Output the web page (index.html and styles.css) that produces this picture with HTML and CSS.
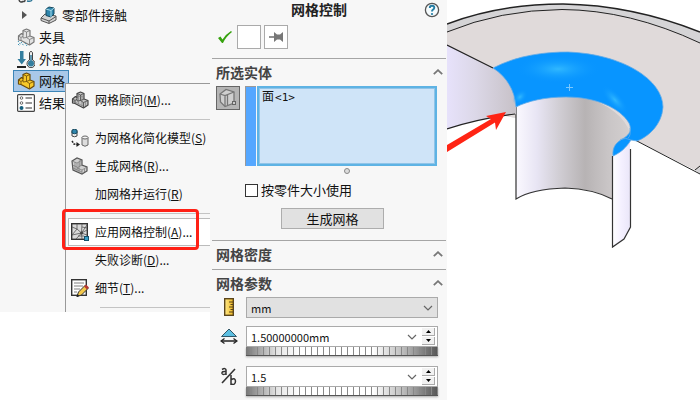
FILE: index.html
```html
<!DOCTYPE html>
<html lang="zh-CN">
<head>
<meta charset="utf-8">
<title>网格控制</title>
<link rel="stylesheet" href="styles.css">
</head>
<body>
<svg class="defs" aria-hidden="true">
  <defs>
    <symbol id="bracket" viewBox="0 0 18 18">
      <path d="M1.500 8 L4.500 5.500 L6 6.500 V2.500 L9.500 1 L13 2.500 V8 L17 9.500 V14 L12.500 17 L4 12.500 L1.500 12Z" fill="var(--body)" stroke="var(--edge)" stroke-width="1.200" stroke-linejoin="round"/>
      <path d="M6 2.500 L9.500 4 L13 2.500 M9.500 4 V9.500 L13 8 M9.500 9.500 L12.500 11.500 L17 9.500 M12.500 11.500 V16.500 M6 6.500 V10 L9.500 9.500 M1.500 8 L4 9.500 L6 8 M4 9.500 V12" fill="none" stroke="var(--edge)" stroke-width=".8"/>
    </symbol>
    <symbol id="up" viewBox="0 0 10 6"><path d="M.8 5.200 L5 1.200 L9.200 5.200" fill="none" stroke="#777" stroke-width="1.800"/></symbol>
    <symbol id="down" viewBox="0 0 10 6"><path d="M1 1 L5 5 L9 1" fill="none" stroke="#666" stroke-width="1.200"/></symbol>
  </defs>
</svg>
<main class="app">
  <nav class="side" aria-label="算例树">
    <ul class="tree">
      <li class="cut"><svg width="18" height="4" viewBox="0 0 18 4"><path d="M1 0 Q2 3 5 1.500 Q7 2 7 0" fill="none" stroke="#444" stroke-width="1.500"/><path d="M9 1 Q13 2 14 0" fill="none" stroke="#2b7596" stroke-width="1.500"/></svg></li>
      <li class="child"><svg class="twist" width="5" height="8" viewBox="0 0 5 8"><path d="M0 0 L5 4 L0 8Z" fill="#555"/></svg>
        <svg class="icon" viewBox="0 0 18 18"><path d="M1 12 L5 8 L16 10 V14 L9 17.500 L1 14.500Z" fill="#d4d4d4" stroke="#555"/><path d="M1 12 L9 15 L16 10.500 M9 15 V17" fill="none" stroke="#555"/><path d="M6 3 L9 1 L14 2 V8 L11 11 L6 9.500Z" fill="#2f86ad" stroke="#17495f"/><path d="M6 3 L11 4.500 L14 2 M11 4.500 V11" fill="none" stroke="#a8dcec"/></svg>零部件接触</li>
      <li><svg class="icon fixture" viewBox="0 0 18 18"><use href="#bracket"/><path d="M1 13 L4 17 M4 14 L7 18 M8 15 L10 18 M1 16 L3 18" stroke="#3b91b3" stroke-dasharray="1.500 1"/></svg>夹具</li>
      <li><svg class="icon" viewBox="0 0 18 18"><path d="M3 1 H6.500 V9 H9 L4.750 14.500 L.5 9 H3Z" fill="#347e9f"/><path d="M0 17 H9" stroke="#222" stroke-width="2"/><path d="M12.500 2.500 Q14 0 15.500 2.500 V10 A4 4 0 1 1 12.500 10Z" fill="#eee" stroke="#444"/><circle cx="14" cy="13.500" r="3" fill="#347e9f"/><path d="M14 5 V12" stroke="#347e9f" stroke-width="1.500"/></svg>外部载荷</li>
      <li class="current"><svg class="icon yellow" viewBox="0 0 18 18"><use href="#bracket"/></svg>网格</li>
      <li><svg class="icon" viewBox="0 0 18 18"><rect x=".6" y=".6" width="16.800" height="16.800" rx="1" fill="#fff" stroke="#444" stroke-width="1.200"/><g fill="#fff" stroke="#666"><circle cx="4.500" cy="4" r="1.300"/><circle cx="4.500" cy="9" r="1.300"/></g><circle cx="4.500" cy="14" r="2" fill="#17607e"/><path d="M8.500 4 H15 M8.500 9 H15 M8.500 14 H15" stroke="#777" stroke-width="1.300"/></svg>结果</li>
    </ul>
    <div class="menu">
      <button class="item"><svg class="icon gray" viewBox="0 0 18 18"><use href="#bracket"/><path d="M3 8 V12 M7.500 4 V13 M11 4 V15 M14.500 10 V15 M2 10 L12 15 M6 5 L13 6" stroke="#777" stroke-width=".6" fill="none"/></svg><span>网格顾问(<u>M</u>)...</span></button>
      <hr>
      <button class="item"><svg class="icon" viewBox="0 0 18 18"><path d="M1 2 V7 Q3.500 8.500 6 7 V2" fill="#eee" stroke="#444"/><path d="M1 1 V4 Q3.500 5.500 6 4 V1 Q3.500 -.5 1 1Z" fill="#2f86ad" stroke="#17495f"/><path d="M1 12 L3 15 L6 15.500" fill="none" stroke="#222" stroke-width="1.500" stroke-dasharray="2 1"/><path d="M5.500 13 L9 15.500 L5.500 18Z" fill="#222"/><path d="M11 8.500 V16 Q14 18.500 17 16 V8.500" fill="#ddd" stroke="#666"/><ellipse cx="14" cy="8.500" rx="3" ry="1.500" fill="#f5f5f5" stroke="#666"/></svg><span>为网格化简化模型(<u>S</u>)</span></button>
      <button class="item"><svg class="icon" viewBox="0 0 18 18"><path d="M1 4 L6 1 L11 3 V8 L16 10 V14 L11 17 L2 13Z" fill="#d0d0d0" stroke="#555" stroke-width="1.200"/><path d="M1 4 L6 6 L11 3 M6 6 V14 M6 11 L11 8 M6 11 L11 13 L16 10 M11 13 V17 M1.500 8 L6 10 M4 5 V13 M8 5 V15 M2 11 L11 15 M9 3 V9 M13.500 12 V15" fill="none" stroke="#777" stroke-width=".7"/></svg><span>生成网格(<u>R</u>)...</span></button>
      <button class="item"><span class="icon"></span><span>加网格并运行(<u>R</u>)</span></button>
      <hr>
      <button class="item hot"><svg class="icon" viewBox="0 0 18 18"><rect x=".7" y=".7" width="15.600" height="15.600" fill="#dadada" stroke="#333" stroke-width="1.400"/><path d="M1 4 L6 6 L10.500 10 L16 2 M6 1 V6 L1 12 L10.500 10 L5 16 M10.500 10 L11 1 M10.500 10 L16 7 M10.500 10 L16 12 M10.500 10 L11 16 M11 4 L16 5 M7 13 L13 13" fill="none" stroke="#555" stroke-width=".8"/><circle cx="10.500" cy="10" r="1.500" fill="#444"/><rect x="13.500" y="13.500" width="4" height="4" fill="#39a0c8" stroke="#16516b"/></svg><span>应用网格控制(<u>A</u>)...</span><i class="mark"></i></button>
      <button class="item"><span class="icon"></span><span>失败诊断(<u>D</u>)...</span></button>
      <button class="item"><svg class="icon" viewBox="0 0 18 18"><rect x=".7" y=".7" width="14.600" height="15.600" fill="#fff" stroke="#333" stroke-width="1.400"/><path d="M3 4 H13 M3 7 H12 M3 10 H9 M3 13 H6" stroke="#aaa" stroke-width="1.300"/><path d="M6 17.500 L7.500 13 L14 6.500 L17 9.500 L10.500 16Z" fill="#f4c84a" stroke="#333"/><path d="M13 7.500 L15 5.500 L18 8.500 L16 10.500Z" fill="#b53832"/><path d="M5.500 18 L6.500 15 L8.500 17Z" fill="#222"/></svg><span>细节(<u>T</u>)...</span></button>
      <hr>
    </div>
  </nav>

  <section class="panel">
    <header class="title"><h1>网格控制</h1>
      <button class="help" aria-label="帮助"><svg width="16" height="16" viewBox="0 0 16 16"><circle cx="8" cy="8" r="6.600" fill="#f5fbfd" stroke="#555" stroke-width="1.300"/><path d="M5.800 6 Q5.800 3.800 8 3.800 Q10.300 3.800 10.300 5.800 Q10.300 7 8.800 7.800 Q8 8.300 8 9.600" fill="none" stroke="#247da4" stroke-width="1.900"/><circle cx="8" cy="12" r="1.100" fill="#247da4"/></svg></button>
    </header>
    <div class="tools">
      <button class="ok" aria-label="确定"><svg width="14" height="12" viewBox="0 0 14 12"><path d="M0 7 L2.500 5.500 L4.500 8.500 Q8 3 13 0 L14 1 Q8 5.500 5 12 H4Z" fill="#36a20e"/></svg></button>
      <button class="box" aria-label="预览"></button>
      <button class="box" aria-label="保持可见"><svg width="14" height="10" viewBox="0 0 14 10"><path d="M0 5 H6" stroke="#777" stroke-width="1.600"/><path d="M5 0 L8 2.500 L11 2.500 L14 0 V10 L11 7.500 H8 L5 10Z" fill="#777"/></svg></button>
    </div>
    <section class="group picks">
      <h2><button class="head">所选实体<svg width="10" height="6"><use href="#up"/></svg></button></h2>
      <div class="pickrow">
        <button class="facebtn" aria-label="面"><svg width="18" height="20" viewBox="0 0 18 20"><path d="M1 6 L7 1.500 L15 4 V15 L6 18.500 L1.500 14Z" fill="#cfcfcf" stroke="#777" stroke-width="1.300"/><path d="M1 6 L6 7.500 L15 4 M6 7.500 V18 M8.500 7 V17" fill="none" stroke="#777" stroke-width="1.300"/><rect x="13.500" y="13.500" width="3" height="3" fill="#ccc" stroke="#666"/></svg></button>
        <div class="list"><span class="swatch"></span><div class="entries">面<span>&lt;1&gt;</span></div></div>
      </div>
      <span class="grip"></span>
      <label class="check"><input type="checkbox">按零件大小使用</label>
      <button class="create">生成网格</button>
    </section>
    <section class="group"><h2><button class="head">网格密度<svg width="10" height="6"><use href="#up"/></svg></button></h2></section>
    <section class="group params">
      <h2><button class="head">网格参数<svg width="10" height="6"><use href="#up"/></svg></button></h2>
      <div class="param">
        <svg class="pic" viewBox="0 0 18 20"><defs><linearGradient id="gold"><stop stop-color="#ffe98a"/><stop offset="1" stop-color="#efb820"/></linearGradient></defs><rect x="4.700" y="1.700" width="8.600" height="16.600" fill="url(#gold)" stroke="#5b451b" stroke-width="1.400"/><path d="M9 5 H13 M10.500 7.500 H13 M9 10 H13 M10.500 12.500 H13 M9 15 H13" stroke="#5b451b"/></svg>
        <div class="field unit"><select aria-label="单位"><option>mm</option></select><svg class="arrow" width="10" height="6"><use href="#down"/></svg></div>
      </div>
      <div class="param">
        <svg class="pic" viewBox="0 0 18 20"><path d="M1.500 10.500 L9 3 L16.500 10.500Z" fill="#5cbfe2" stroke="#315666"/><path d="M2 15 H16" stroke="#222" stroke-width="1.500"/><path d="M4.500 12.500 L1 15 L4.500 17.500 M13.500 12.500 L17 15 L13.500 17.500" fill="none" stroke="#222" stroke-width="1.300"/></svg>
        <div class="stack"><div class="field"><input aria-label="单元大小" value="1.50000000mm"><svg class="arrow" width="10" height="6"><use href="#down"/></svg><span class="spin"><button aria-label="增大"><svg width="5" height="3"><path d="M0 3 L2.500 0 L5 3Z"/></svg></button><button aria-label="减小"><svg width="5" height="3"><path d="M0 0 L2.500 3 L5 0Z"/></svg></button></span></div><div class="wheel"></div></div>
      </div>
      <div class="param">
        <svg class="pic" viewBox="0 0 18 20"><path d="M2 3.500 Q5.500 1.500 6 4 V9 M6 5.500 Q1.500 5 2 7.500 Q3 9.500 6 7.500" fill="none" stroke="#333" stroke-width="1.500"/><path d="M2 17 L15 3" stroke="#333" stroke-width="1.600"/><path d="M11 9 V19 M11 14 Q15 11 15.500 15 Q15.500 19.500 11 18" fill="none" stroke="#333" stroke-width="1.500"/></svg>
        <div class="stack"><div class="field"><input aria-label="比率" value="1.5"><svg class="arrow" width="10" height="6"><use href="#down"/></svg><span class="spin"><button aria-label="增大"><svg width="5" height="3"><path d="M0 3 L2.500 0 L5 3Z"/></svg></button><button aria-label="减小"><svg width="5" height="3"><path d="M0 0 L2.500 3 L5 0Z"/></svg></button></span></div><div class="wheel"></div></div>
      </div>
    </section>
  </section>

  <svg class="view" viewBox="447 0 253 400" preserveAspectRatio="xMinYMin slice" role="img" aria-label="零件模型">
    <defs>
      <linearGradient id="tube"><stop stop-color="#fbf9ff"/><stop offset=".18" stop-color="#e8e5f4"/><stop offset=".38" stop-color="#d0cdd3"/><stop offset=".6" stop-color="#b7b3b4"/><stop offset=".8" stop-color="#c9c5c6"/><stop offset="1" stop-color="#d4d0d0"/></linearGradient>
      <linearGradient id="wall"><stop stop-color="#e7e2fb"/><stop offset=".4" stop-color="#dcd8e8"/><stop offset="1" stop-color="#c7c1c7"/></linearGradient>
      <linearGradient id="strip"><stop stop-color="#fff"/><stop offset=".5" stop-color="#f4f0ff"/><stop offset="1" stop-color="#e9e5f8"/></linearGradient>
      <radialGradient id="shine"><stop stop-color="#35bcff" stop-opacity=".9"/><stop offset="1" stop-color="#0a96ff" stop-opacity="0"/></radialGradient>
    </defs>
    <path d="M447 24 Q500 4 563 4 Q632 5 700 32 V174 L695 170 L636 140 L500 115 L447 90Z" fill="#d5d4d6"/>
    <path d="M447 32 Q500 10 562 9.500 Q630 10 700 43 V168 L695 170 L636 140 L500 115 L447 90Z" fill="#e0dada"/>
    <path d="M447 24 Q500 4 563 4 Q632 5 700 32" fill="none" stroke="#222" stroke-width="1.500"/>
    <path d="M447 32 Q500 10 562 9.500 Q630 10 700 43 M636 140.500 L700 174 M695 170 L700 166" fill="none" stroke="#222"/>
    <path d="M516 107 Q540 90 590 98 Q630 115 631 140 L612 157 V199 Q593 188 565 188 Q532 190 516 199Z" fill="url(#tube)"/>
    <path d="M516 107 V199 Q532 189 565 188 Q593 189 612 199" fill="none" stroke="#333" stroke-width="1.200"/>
    <path d="M447 45 L493 68 C509 77 516 92 516 107 V114 Q477 119 447 129Z" fill="url(#wall)"/>
    <path d="M447 45 L493 68 M447 129 Q477 119 515 114" fill="none" stroke="#222" stroke-width="1.200"/>
    <path d="M612 156 L630 140 L631 227 L625 238 L612 247Z" fill="url(#strip)"/>
    <path d="M612.500 156 V247 L624 239 L630.500 227 V149" fill="none" stroke="#333" stroke-width="1.200"/>
    <path d="M493 68 C518 55 545 52 568 52 C623 54 663 80 663 107 C662 125 648 137 637 141 L631 140 C626 148 620 153 613 156 C612 146 617 142 624 138 C630 134 632 130 629 123 C620 108 596 97 566 97 C545 97 528 101 516 107 C515 91 507 77 493 68Z" fill="#0895ff" stroke="#65abe6" stroke-width=".8"/>
    <path d="M620 139.500 Q626 137 631 140 M630 128 Q631 136 628 138" fill="none" stroke="#65abe6" stroke-width=".8"/>
    <ellipse cx="558" cy="69" rx="42" ry="14" fill="url(#shine)"/>
    <ellipse cx="615" cy="100" rx="18" ry="7" transform="rotate(48 615 100)" fill="url(#shine)"/>
    <ellipse cx="520" cy="97" rx="9" ry="6" transform="rotate(-45 520 97)" fill="url(#shine)"/>
    <path d="M566 87.500 H573 M569.500 84 V91" stroke="#7ac8ff"/>
    <path d="M447 145 L491 119 L486 116 L506 112 L496 130 L495 122.500 L447 152Z" fill="#ff2414"/>
  </svg>
</main>
</body>
</html>
```

FILE: styles.css
```css
* { box-sizing: border-box; }
body { margin: 0; background: #fff; color: #111; font: 13px/20px "Noto Sans CJK SC", "Noto Sans", sans-serif; }
button, input, select { margin: 0; padding: 0; border: 0; background: none; color: inherit; font: inherit; }
h1, h2 { margin: 0; font-size: 14px; line-height: 20px; }
.defs { position: absolute; width: 0; height: 0; }
.app { display: grid; grid-template-columns: 210px 237px minmax(0, 1fr); min-height: 100vh; overflow: hidden; }

.side { position: relative; align-self: start; background: #f7f7f7; min-height: 312px; }
.tree { list-style: none; margin: 0; padding: 0 0 0 13px; }
.tree li { display: flex; align-items: center; gap: 4px; width: max-content; height: 22px; padding: 0 3px; border: 1px solid transparent; }
.tree .cut { height: 4px; border: 0; padding: 0 5px; }
.tree .child { padding-left: 8px; }
.twist { margin-right: 9px; }
.tree .current { background: #a9c8e8; border-color: #3c85b8; }
.icon { flex: none; width: 18px; height: 18px; --body: #d0d0d0; --edge: #555; }
.yellow { --body: #f8c928; --edge: #6b4a08; }
.fixture { --body: #e2e2e2; --edge: #777; }
.gray { --body: #c4c4c4; --edge: #444; }

.menu { position: absolute; top: 83px; left: 65px; right: 0; padding: 2px 0 0 2px; background: #f7f7f7; border: solid #999; border-width: 1px 0 0 1px; font-size: 12px; }
.item { position: relative; display: flex; align-items: center; gap: 6px; width: 100%; height: 28px; padding-left: 3px; white-space: nowrap; text-align: left; }
.hot { background: #fff; border: solid #bbb; border-width: 1px 0 1px 1px; padding-left: 2px; }
.menu hr { height: 1px; margin: 5px 0 4px 32px; border: 0; background: #c4c4c4; }
.mark { position: absolute; inset: -10px 11px -5px -7px; border: 3px solid #ff2116; border-radius: 4px; }

.panel { background: #f7f7f7; padding-left: 2px; }
.title { display: flex; align-items: center; height: 20px; padding: 0 7px 0 2px; }
.title h1 { flex: 1; margin-top: -2px; text-align: center; color: #222; }
.help { display: flex; }
.tools { display: flex; align-items: center; gap: 3px; height: 38px; padding: 0 3px 4px; }
.tools button { display: flex; align-items: center; justify-content: center; }
.ok { width: 19px; height: 24px; }
.box { width: 24px; height: 24px; background: #fff; border: 1px solid #aaa; }
.group { border-top: 1px solid #a5a5a5; margin-right: 1px; padding-bottom: 4px; }
.head { display: flex; align-items: center; justify-content: space-between; width: 100%; height: 24px; padding: 2px 3px 0 4px; color: #444; font-weight: 700; }
.picks { display: flow-root; padding-bottom: 11px; }
.pickrow { display: flex; gap: 5px; margin: 3px 9px 0 4px; }
.facebtn { display: flex; align-items: center; justify-content: center; width: 24px; height: 24px; background: #b5b5b5; border: 1px solid #666; }
.list { display: flex; flex: 1; gap: 1px; height: 80px; }
.swatch { width: 11px; background: #55a7ff; border: solid #999; border-width: 1px 0 0 1px; }
.entries { flex: 1; padding: 0 3px; background: #cfe4f8; border: 2px solid #5eb3e4; box-shadow: inset 0 0 0 1px #90c4e8; font-size: 12px; line-height: 16px; }
.entries span { font: 11px/16px "DejaVu Sans Mono", monospace; margin-left: 1px; }
.grip { display: block; width: 6px; height: 6px; margin: 2px 96px 0 auto; border: 1px solid #888; border-radius: 50%; background: #ddd; }
.check { display: flex; align-items: center; gap: 3px; width: max-content; margin: 6px 0 0 33px; }
.check input { appearance: none; width: 13px; height: 13px; background: #fff; border: 1px solid #333; }
.create { display: block; width: 103px; height: 21px; margin: 8px 0 0 69px; background: #e1e1e1; border: 1px solid #adadad; line-height: 19px; }
.params { padding-bottom: 0; }
.params h2 { margin-bottom: 3px; }
.param { display: flex; align-items: flex-start; gap: 8px; margin: 0 8px 10px; }
.param:first-of-type { margin-bottom: 8px; }
.param:last-child { margin-bottom: 0; }
.pic { flex: none; width: 18px; height: 20px; }
.stack, .unit { flex: 1; min-width: 0; }
.field { display: flex; align-items: center; height: 21px; padding: 0 2px 0 4px; background: #fff; border: 1px solid #aaa; font-size: 11px; }
.field input { flex: 1; width: 0; min-width: 0; height: 19px; }
.field select { appearance: none; flex: 1; height: 19px; }
.unit { background: #e1e1e1; padding-right: 4px; }
.arrow { flex: none; pointer-events: none; }
.spin { display: grid; grid-template-rows: 1fr 1fr; gap: 1px; height: 19px; width: 13px; margin-left: 5px; padding: 1px 0; }
.spin button { display: flex; align-items: center; justify-content: center; background: #f2f2f2; border: solid #aaa; border-width: 0 1px 1px 0; }
.wheel { height: 9px; border-bottom: 1px solid #555; background: repeating-linear-gradient(90deg, transparent 0 5px, #888 5px 6px), linear-gradient(90deg, #777, #e4e4e4 16%, #fff 28%, #fff 66%, #bbb 82%, #555); box-shadow: 0 1px 2px #aaa; }
.view { width: 100%; height: 100%; min-width: 0; min-height: 0; }
```
